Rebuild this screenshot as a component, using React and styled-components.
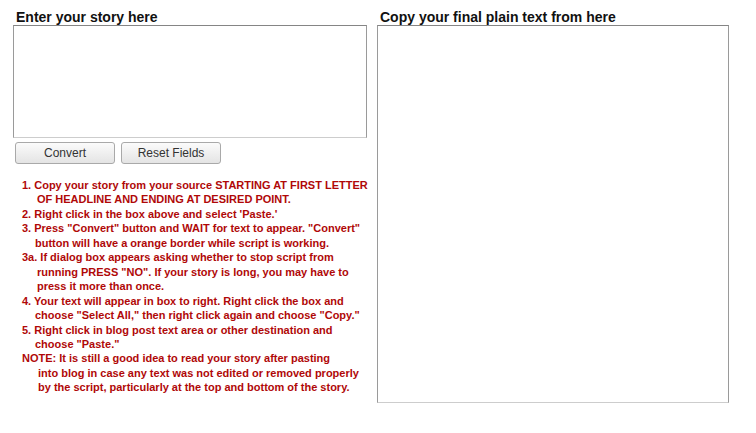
import React from "react";
import styled, { createGlobalStyle } from "styled-components";

const Global = createGlobalStyle`
  html, body { margin: 0; padding: 0; background: #fff; }
  body { font-family: "Liberation Sans", Arial, sans-serif; }
`;

const Page = styled.div`
  display: flex;
  align-items: flex-start;
  gap: 10px;
  padding: 10px 0 0 13px;
`;

const Column = styled.div`
  display: flex;
  flex-direction: column;
  width: ${(p) => p.$w}px;
`;

const Title = styled.h2`
  margin: 0 0 0 ${(p) => p.$indent}px;
  font-size: 14px;
  line-height: 15px;
  font-weight: bold;
  color: #111;
`;

const Box = styled.textarea`
  box-sizing: border-box;
  display: block;
  width: 100%;
  height: ${(p) => p.$h}px;
  margin: 0;
  padding: 2px;
  resize: none;
  background: #fff;
  border: 1px solid #9a9a9a;
  border-top-color: #858585;
  border-bottom-color: #cdcdcd;
  outline: none;
`;

const ButtonRow = styled.div`
  display: flex;
  gap: 6px;
  margin: 4px 0 0 2px;
`;

const Button = styled.button`
  box-sizing: border-box;
  width: 100px;
  height: 22px;
  padding: 0;
  font-family: "Liberation Sans", Arial, sans-serif;
  font-size: 12px;
  color: #333;
  background: linear-gradient(#fbfbfb, #e4e4e4);
  border: 1px solid #a9a9a9;
  border-radius: 3px;
`;

const Steps = styled.div`
  margin: 14px 0 0 9px;
  font-size: 11px;
  line-height: 14.45px;
  font-weight: bold;
  color: #b00808;
  white-space: nowrap;
`;

const Step = styled.div`
  padding-left: ${(p) => p.$hang}px;
  text-indent: -${(p) => p.$hang}px;
`;

const steps = [
  { hang: 15, lines: ["1. Copy your story from your source STARTING AT FIRST LETTER", "OF HEADLINE AND ENDING AT DESIRED POINT."] },
  { hang: 15, lines: ["2. Right click in the box above and select 'Paste.'"] },
  { hang: 13, lines: ["3. Press \"Convert\" button and WAIT for text to appear. \"Convert\"", "button will have a orange border while script is working."] },
  { hang: 15, lines: ["3a. If dialog box appears asking whether to stop script from", "running PRESS \"NO\". If your story is long, you may have to", "press it more than once."] },
  { hang: 13, lines: ["4. Your text will appear in box to right. Right click the box and", "choose \"Select All,\" then right click again and choose \"Copy.\""] },
  { hang: 13, lines: ["5. Right click in blog post text area or other destination and", "choose \"Paste.\""] },
  { hang: 16, lines: ["NOTE: It is still a good idea to read your story after pasting", "into blog in case any text was not edited or removed properly", "by the script, particularly at the top and bottom of the story."] },
];

export default function App() {
  return (
    <>
      <Global />
      <Page>
        <Column $w={354}>
          <Title $indent={3}>Enter your story here</Title>
          <Box $h={113} />
          <ButtonRow>
            <Button>Convert</Button>
            <Button>Reset Fields</Button>
          </ButtonRow>
          <Steps>
            {steps.map((s, i) => (
              <Step key={i} $hang={s.hang}>
                {s.lines.map((l, j) => (
                  <React.Fragment key={j}>
                    {j > 0 && <br />}
                    {l}
                  </React.Fragment>
                ))}
              </Step>
            ))}
          </Steps>
        </Column>
        <Column $w={352}>
          <Title $indent={3}>Copy your final plain text from here</Title>
          <Box $h={378} />
        </Column>
      </Page>
    </>
  );
}
